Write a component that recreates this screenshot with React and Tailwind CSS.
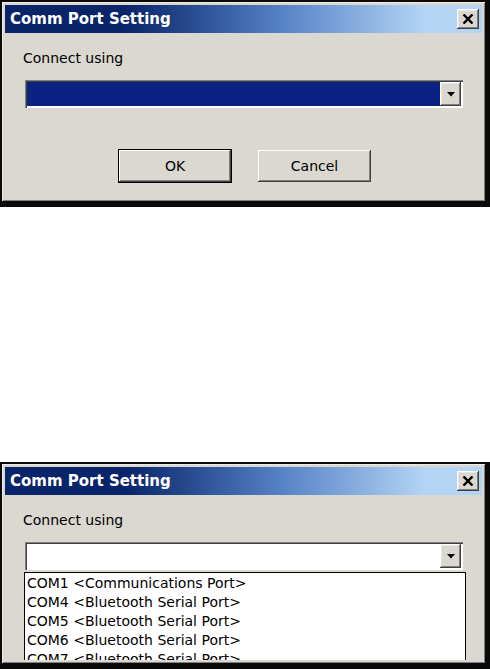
import React from "react";

function CloseButton() {
  return (
    <div className="w-[22px] h-[20px] bg-[#d9d7d0] flex items-center justify-center shadow-[inset_-1px_-1px_#404040,inset_1px_1px_#ffffff,inset_-2px_-2px_#808080,inset_2px_2px_#e8e6e0]">
      <svg width="12" height="10" viewBox="0 0 12 10">
        <path d="M1.5 0.5 L10.5 9.5 M10.5 0.5 L1.5 9.5" stroke="#000" strokeWidth="2.4" />
      </svg>
    </div>
  );
}

function Arrow() {
  return (
    <div className="w-[21px] h-full bg-[#d9d7d0] flex items-center justify-center shadow-[inset_-1px_-1px_#404040,inset_1px_1px_#ffffff,inset_-2px_-2px_#808080,inset_2px_2px_#e8e6e0]">
      <svg width="8" height="5" viewBox="0 0 8 5">
        <path d="M0 0 L8 0 L4 4.5 Z" fill="#000" />
      </svg>
    </div>
  );
}

function Dialog({ open }) {
  return (
    <div className="w-[490px] h-[207px] shrink-0 bg-[#0a0a0a] pt-[2px] pl-[2px] pr-[5px] pb-[6px]">
      <div className="h-full bg-[#dad8d1] p-[3px] flex flex-col shadow-[inset_1px_1px_#ecebe6,inset_-1px_-1px_#808080]">
        <div className="h-[28px] shrink-0 flex items-center justify-between pl-[5px] pr-[3px] bg-gradient-to-r from-[#0a246a] from-[25%] via-[#5683c6] via-[58%] to-[#b4d4f4] to-[88%]">
          <span className="text-white font-bold text-[15px] leading-[18px]">Comm Port Setting</span>
          <CloseButton />
        </div>
        <div className="pl-[18px] pt-[17px] text-[14px] leading-[17px] text-black">Connect using</div>
        <div className="ml-[20px] mt-[13px] w-[438px] h-[28px] shrink-0 p-[2px] bg-white shadow-[inset_1px_1px_#808080,inset_2px_2px_#404040] flex">
          <div className={open ? "flex-1 bg-white" : "flex-1 bg-[#0c2283]"} />
          <Arrow />
        </div>
        {open ? (
          <div className="ml-[19px] mt-[2px] w-[442px] flex-1 overflow-hidden bg-white border border-black border-b-0 pl-[2px] pt-[1px] text-[14px] leading-[19px] text-black">
            <div>COM1 &lt;Communications Port&gt;</div>
            <div>COM4 &lt;Bluetooth Serial Port&gt;</div>
            <div>COM5 &lt;Bluetooth Serial Port&gt;</div>
            <div>COM6 &lt;Bluetooth Serial Port&gt;</div>
            <div>COM7 &lt;Bluetooth Serial Port&gt;</div>
          </div>
        ) : (
          <div className="mt-[41px] flex justify-center items-start gap-[26px] pl-[2px]">
            <div className="w-[114px] h-[34px] border border-black bg-[#dad8d1] flex items-center justify-center shadow-[inset_-1px_-1px_#404040,inset_1px_1px_#ffffff,inset_-2px_-2px_#808080] text-[14px] text-black">
              OK
            </div>
            <div className="mt-[1px] w-[113px] h-[32px] bg-[#dad8d1] flex items-center justify-center shadow-[inset_-1px_-1px_#404040,inset_1px_1px_#ffffff,inset_-2px_-2px_#808080] text-[14px] text-black">
              Cancel
            </div>
          </div>
        )}
      </div>
    </div>
  );
}

export default function App() {
  return (
    <div className="w-[490px] h-[669px] bg-white flex flex-col overflow-hidden font-['DejaVu_Sans',sans-serif]">
      <Dialog open={false} />
      <div className="h-[255px] shrink-0" />
      <Dialog open={true} />
    </div>
  );
}
